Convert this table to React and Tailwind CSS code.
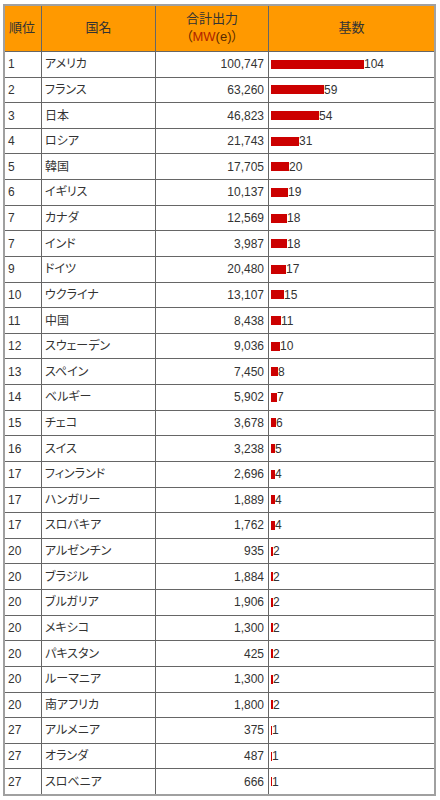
import React from "react";

const rows = [
  ["1", "アメリカ", "100,747", 104],
  ["2", "フランス", "63,260", 59],
  ["3", "日本", "46,823", 54],
  ["4", "ロシア", "21,743", 31],
  ["5", "韓国", "17,705", 20],
  ["6", "イギリス", "10,137", 19],
  ["7", "カナダ", "12,569", 18],
  ["7", "インド", "3,987", 18],
  ["9", "ドイツ", "20,480", 17],
  ["10", "ウクライナ", "13,107", 15],
  ["11", "中国", "8,438", 11],
  ["12", "スウェーデン", "9,036", 10],
  ["13", "スペイン", "7,450", 8],
  ["14", "ベルギー", "5,902", 7],
  ["15", "チェコ", "3,678", 6],
  ["16", "スイス", "3,238", 5],
  ["17", "フィンランド", "2,696", 4],
  ["17", "ハンガリー", "1,889", 4],
  ["17", "スロバキア", "1,762", 4],
  ["20", "アルゼンチン", "935", 2],
  ["20", "ブラジル", "1,884", 2],
  ["20", "ブルガリア", "1,906", 2],
  ["20", "メキシコ", "1,300", 2],
  ["20", "パキスタン", "425", 2],
  ["20", "ルーマニア", "1,300", 2],
  ["20", "南アフリカ", "1,800", 2],
  ["27", "アルメニア", "375", 1],
  ["27", "オランダ", "487", 1],
  ["27", "スロベニア", "666", 1],
];

export default function App() {
  return (
    <div className="w-[440px] h-[800px] bg-white pt-[4px] pl-[3px] font-['Liberation_Sans','Noto_Sans_CJK_JP',sans-serif] [font-feature-settings:'palt'] text-[12px] text-[#333]">
      <div className="w-[433px] h-[792px] border-2 border-[#a0a0a0] bg-[#666] grid grid-cols-[36px_113px_112px_165px] grid-rows-[45px_repeat(29,minmax(0,1fr))] gap-px">
        <div className="bg-[#ff9900] flex items-center pl-[4px] pb-[2px] text-[13px]">順位</div>
        <div className="bg-[#ff9900] flex items-center justify-center pb-[2px] text-[13px]">国名</div>
        <div className="bg-[#ff9900] flex flex-col items-center justify-center pb-[2px] text-[13px] leading-[18px]">
          <span>合計出力</span>
          <span className="text-[#5a2a00]">
            <span>（</span>
            <span className="text-[#b02400]">MW</span>
            <span>(e)</span>
            <span>）</span>
          </span>
        </div>
        <div className="bg-[#ff9900] flex items-center justify-center pb-[1px] text-[13px]">基数</div>
        {rows.map(([rank, name, cap, n], i) => (
          <React.Fragment key={i}>
            <div className="bg-white flex items-center pl-[3px]">{rank}</div>
            <div className="bg-white flex items-center pl-[3px]">{name}</div>
            <div className="bg-white flex items-center justify-end pr-[4px]">{cap}</div>
            <div className="bg-white flex items-center pl-[2px]">
              <span
                className="inline-block h-[9px] bg-[#cc0000]"
                style={{ width: Math.max(1, Math.round(n * 0.89)) + "px" }}
              />
              <span>{n}</span>
            </div>
          </React.Fragment>
        ))}
      </div>
    </div>
  );
}
